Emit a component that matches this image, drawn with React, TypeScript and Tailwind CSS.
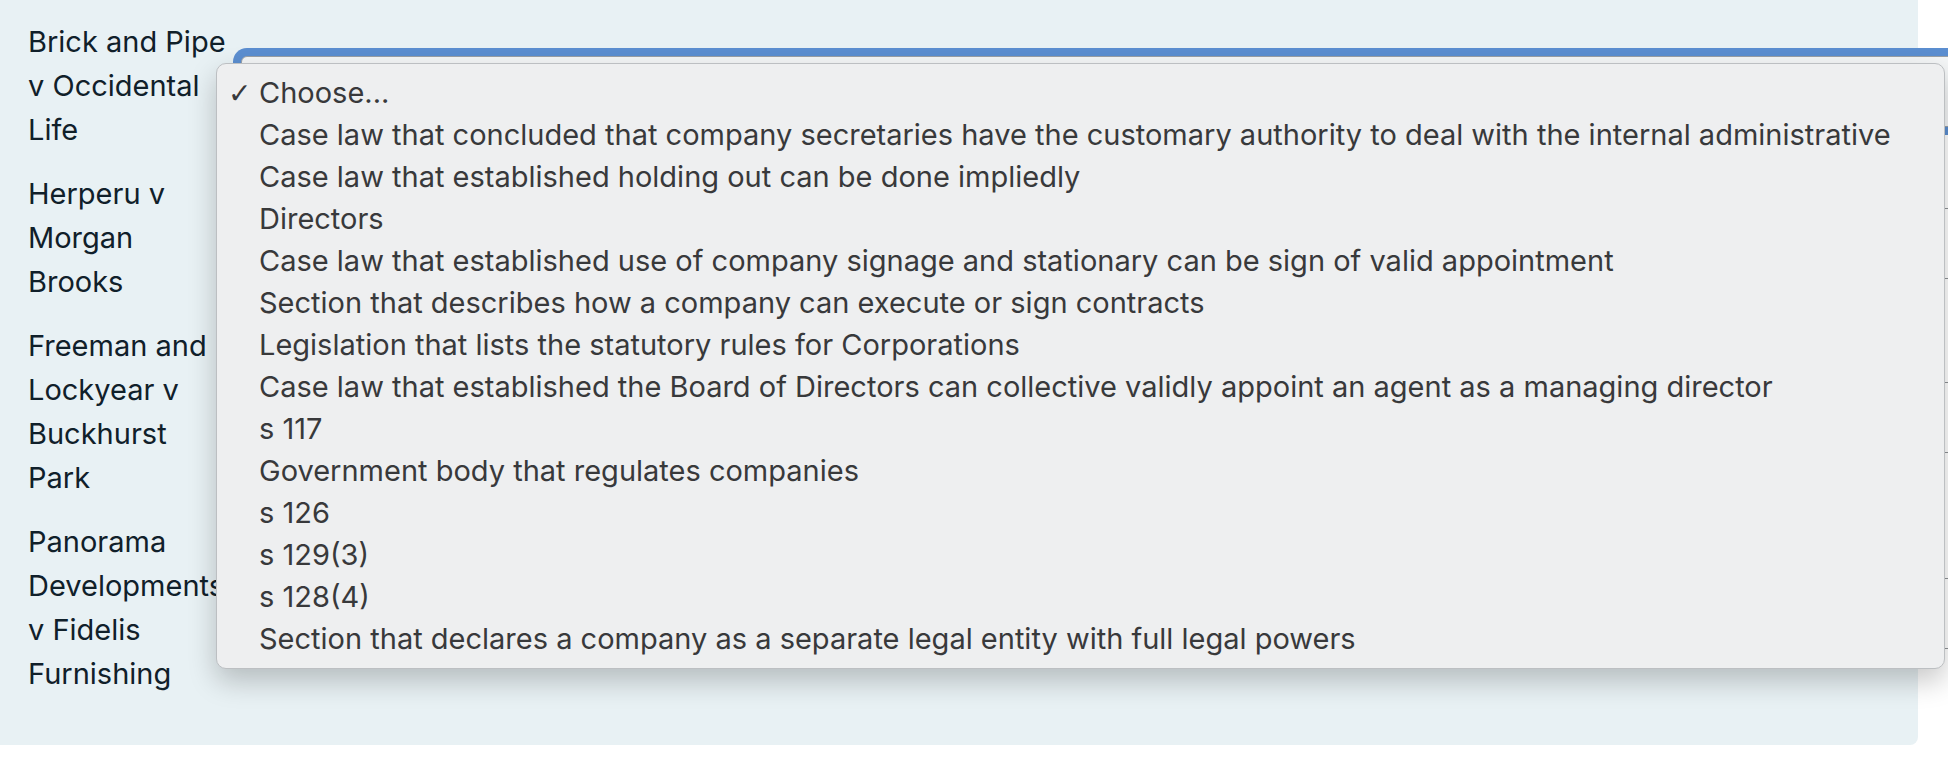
const cases = [
  ["Brick and Pipe v Occidental Life", true],
  ["Herperu v Morgan Brooks", false],
  ["Freeman and Lockyear v Buckhurst Park", false],
  ["Panorama Developments v Fidelis Furnishing", false],
] as const;

const options = [
  "Choose...",
  "Case law that concluded that company secretaries have the customary authority to deal with the internal administrative",
  "Case law that established holding out can be done impliedly",
  "Directors",
  "Case law that established use of company signage and stationary can be sign of valid appointment",
  "Section that describes how a company can execute or sign contracts",
  "Legislation that lists the statutory rules for Corporations",
  "Case law that established the Board of Directors can collective validly appoint an agent as a managing director",
  "s 117",
  "Government body that regulates companies",
  "s 126",
  "s 129(3)",
  "s 128(4)",
  "Section that declares a company as a separate legal entity with full legal powers",
];

function MatchRow({ label, focused }: { label: string; focused: boolean }) {
  return (
    <div className="flex items-center gap-[13px]">
      <div className="w-[200px] shrink-0 text-[29px] leading-[44px] text-[#10202a]">{label}</div>
      <div
        className={
          focused
            ? "mt-[10px] h-[71px] w-[1800px] shrink-0 rounded-[6px] border border-[#9aa0a6] bg-[#f4f6f7] shadow-[0_0_0_8px_#5b8ed0]"
            : "mt-[10px] h-[71px] w-[1800px] shrink-0 rounded-[6px] border border-[#8e9296] bg-white"
        }
      />
    </div>
  );
}

export default function App() {
  return (
    <div className="relative h-[776px] w-[1948px] overflow-hidden bg-white font-['Inter',sans-serif]">
      <div className="h-[745px] w-[1918px] rounded-br-[8px] bg-[#e8f1f4] pl-[28px] pt-[20px]">
        <div className="flex flex-col gap-[20px]">
          {cases.map(([label, focused]) => (
            <MatchRow key={label} label={label} focused={focused} />
          ))}
        </div>
      </div>

      <ul className="absolute left-[216px] top-[63px] w-[1729px] rounded-[10px] border border-[#bcbfc2] bg-[#eeeff0] py-[8px] shadow-[0_12px_28px_rgba(0,0,0,0.22)]">
        {options.map((opt, i) => (
          <li key={opt} className="relative whitespace-nowrap pl-[42px] text-[29px] leading-[42px] text-[#38393b]">
            {i === 0 && (
              <span className="absolute left-[11px] top-[1px] font-['DejaVu_Sans',sans-serif] text-[28px] leading-[42px]">
                ✓
              </span>
            )}
            {opt}
          </li>
        ))}
      </ul>
    </div>
  );
}
